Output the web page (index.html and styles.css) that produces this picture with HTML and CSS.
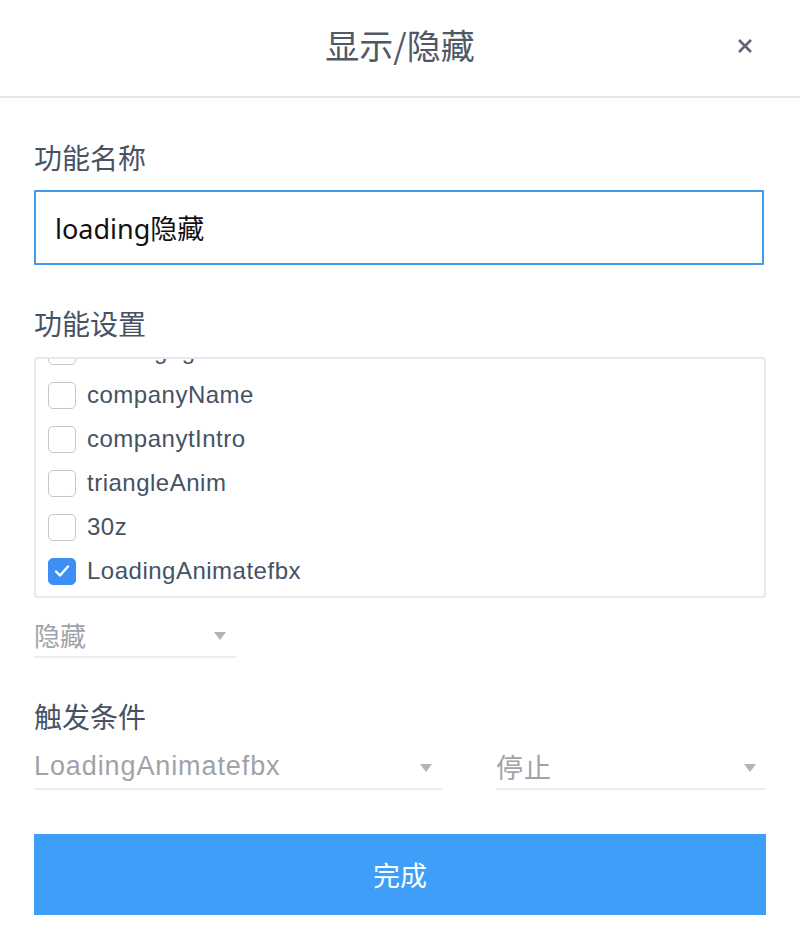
FILE: index.html
```html
<!DOCTYPE html>
<html>
<head>
	<title>显示/隐藏</title>
	<link rel="stylesheet" href="styles.css">
</head>
<body>
	<div id="dialog">
		<div class="dialog-header">
			<h1 class="dialog-title">显示/隐藏</h1>
			<span class="dialog-close">
				<svg width="16" height="16" viewBox="0 0 16 16"><path d="M2 2 L14 14 M14 2 L2 14" stroke="#5d6570" stroke-width="2.6" fill="none"/></svg>
			</span>
		</div>
		<div class="dialog-body">
			<div class="field-label first">功能名称</div>
			<input class="text-input" type="text" value="loading隐藏">

			<div class="field-label">功能设置</div>
			<div class="check-box">
				<ul class="check-list">
					<li class="check-item"><span class="check"></span>loadingbg</li>
					<li class="check-item"><span class="check"></span>companyName</li>
					<li class="check-item"><span class="check"></span>companytIntro</li>
					<li class="check-item"><span class="check"></span>triangleAnim</li>
					<li class="check-item"><span class="check"></span>30z</li>
					<li class="check-item"><span class="check checked"><svg width="16" height="14" viewBox="0 0 16 14"><path d="M2 7.5 L6 11.5 L14 2.5" stroke="#fff" stroke-width="2.4" fill="none" stroke-linecap="round" stroke-linejoin="round"/></svg></span>LoadingAnimatefbx</li>
				</ul>
			</div>
			<div class="select small">
				<span>隐藏</span>
				<span class="arrow"></span>
			</div>

			<div class="field-label">触发条件</div>
			<div class="select-row">
				<div class="select">
					<span>LoadingAnimatefbx</span>
					<span class="arrow"></span>
				</div>
				<div class="select">
					<span>停止</span>
					<span class="arrow"></span>
				</div>
			</div>

			<button class="done-button">完成</button>
		</div>
	</div>
</body>
</html>
```

FILE: styles.css
```css
body {
	margin: 0;
	background-color: white;
	font-family: "Liberation Sans", "Noto Sans CJK SC", sans-serif;
}

#dialog {
	width: 800px;
}

.dialog-header {
	height: 96px;
	border-bottom: 2px solid #e6e6e6;
	display: flex;
	align-items: center;
	justify-content: center;
	position: relative;
}

.dialog-title {
	margin: 0;
	font-family: "Noto Sans CJK SC", sans-serif;
	font-weight: normal;
	font-size: 34px;
	color: #4f5966;
	line-height: 40px;
	margin-top: -6px;
}

.dialog-close {
	position: absolute;
	right: 47px;
	top: 38px;
	width: 16px;
	height: 16px;
	display: flex;
}

.dialog-body {
	padding: 0 34px;
}

.field-label {
	font-family: "Noto Sans CJK SC", sans-serif;
	font-size: 28px;
	line-height: 40px;
	color: #475365;
	margin-top: 38px;
}

.field-label.first {
	margin-top: 39px;
}

.text-input {
	display: block;
	box-sizing: border-box;
	width: 730px;
	height: 75px;
	margin: 13px 0 0;
	padding: 0 19px;
	border: 2px solid #4299f0;
	border-radius: 1px;
	outline: none;
	font-family: "Noto Sans", "Noto Sans CJK SC", sans-serif;
	font-size: 27px;
	color: #111;
}

.check-box {
	margin-top: 14px;
	height: 237px;
	border: 2px solid #e8e9ee;
	border-radius: 4px;
	overflow: hidden;
}

.check-list {
	list-style-type: none;
	margin: -30px 0 0;
	padding: 0 0 0 12px;
}

.check-item {
	height: 44px;
	display: flex;
	align-items: center;
	font-size: 24px;
	letter-spacing: 0.5px;
	color: #465264;
}

.check {
	box-sizing: border-box;
	width: 28px;
	height: 27px;
	border: 1.5px solid #c3c6cc;
	border-radius: 5px;
	background-color: white;
	margin-right: 11px;
	display: flex;
	align-items: center;
	justify-content: center;
}

.check.checked {
	background-color: #3d8ff5;
	border-color: #3d8ff5;
}

.select {
	height: 44px;
	border-bottom: 2px solid #ebedf2;
	display: flex;
	align-items: center;
	justify-content: space-between;
	font-size: 26px;
	color: #9fa3a9;
}

.select.small {
	width: 202px;
	margin-top: 14px;
}

.select .arrow {
	width: 0;
	height: 0;
	border-left: 6px solid transparent;
	border-right: 6px solid transparent;
	border-top: 8px solid #b0b4bb;
	margin-right: 10px;
	margin-top: 4px;
}

.select-row {
	display: grid;
	grid-template-columns: 408px 1fr;
	gap: 54px;
	margin-top: 8px;
}

.select-row .select {
	font-size: 27px;
	letter-spacing: 0.9px;
}

.done-button {
	display: block;
	width: 732px;
	height: 81px;
	margin-top: 44px;
	border: none;
	background-color: #3e9ef8;
	color: white;
	font-family: "Noto Sans CJK SC", sans-serif;
	font-size: 27px;
	cursor: pointer;
}
```
